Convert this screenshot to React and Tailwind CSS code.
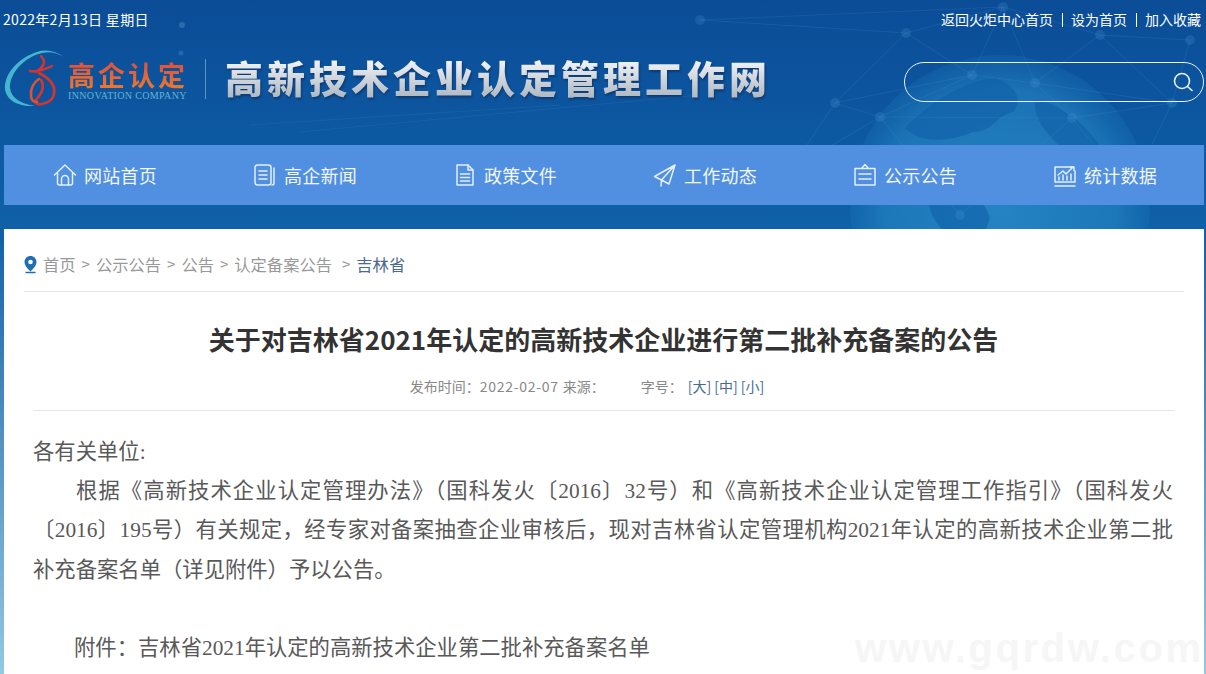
import React from "react";

const sans = "font-['Noto_Sans_CJK_SC','Noto_Sans',sans-serif]";

function HeaderArt() {
  const nodes = [[906,33],[1003,7],[1100,35],[835,103],[972,75],[1035,83],[1172,103],[1072,118],[880,117],[790,170],[1130,190],[960,215],[1190,40],[700,20]];
  const links = [[0,1],[1,2],[0,3],[0,4],[1,4],[1,5],[2,5],[2,6],[3,8],[4,8],[4,5],[5,7],[5,6],[7,6],[8,7],[3,4],[2,12],[6,12],[9,3],[9,8],[10,6],[10,7],[11,7],[11,8],[13,0],[13,1]];
  return (
    <svg className="absolute left-0 top-0" width="1206" height="229" viewBox="0 0 1206 229" fill="none">
      <defs>
        <radialGradient id="globe" cx="50%" cy="50%" r="50%">
          <stop offset="0%" stopColor="#2f93cf" stopOpacity="0.7" />
          <stop offset="78%" stopColor="#2a8fcb" stopOpacity="0.5" />
          <stop offset="100%" stopColor="#1f7fc0" stopOpacity="0.2" />
        </radialGradient>
      </defs>
      <circle cx="1000" cy="205" r="150" fill="url(#globe)" />
      <path d="M905 128c20-22 60-48 90-50 22 8 28 22 18 34-18 4-20 20-40 20-20 8-50 14-68-4zM1035 100c26 2 60 30 76 64-12 8-30 2-42-10-14-12-36-30-34-54zM930 190c26-8 52 2 60 28l-4 11h-44c-12-12-16-28-12-39z" fill="#0e5da6" fillOpacity="0.55" />
      {links.map(([a, b], i) => (
        <line key={i} x1={nodes[a][0]} y1={nodes[a][1]} x2={nodes[b][0]} y2={nodes[b][1]} stroke="#5aa5dc" strokeOpacity="0.15" strokeWidth="1" />
      ))}
      {nodes.map(([x, y], i) => (
        <circle key={i} cx={x} cy={y} r="5" fill="#4f9ad8" fillOpacity="0.22" />
      ))}
      <circle cx="182" cy="25" r="3" fill="#8fc0e8" fillOpacity="0.25" />
      <circle cx="181" cy="53" r="2.500" fill="#8fc0e8" fillOpacity="0.2" />
      <path d="M250 125 L560 105 M300 132 L700 95" stroke="#4f9ad8" strokeOpacity="0.14" />
    </svg>
  );
}

function LogoMark() {
  return (
    <svg width="62" height="60" viewBox="0 0 62 60" fill="none" className="shrink-0">
      <path d="M60 8C52 2 42 0 33 3 14 9 0 25 1 40c1 9 10 18 30 17-14-2-24-8-25-18C5 25 20 8 38 4c8-2 15 0 22 4z" fill="#45b6cf" />
      <path d="M37 7c4 4 4 8 0 12l-5 4M26 22c7 1 16-2 22-5" stroke="#d8342c" strokeWidth="2.400" strokeLinecap="round" />
      <path d="M35 24c12 6 18 14 14 24-2 5-7 6-11 7-5 1-8-1-6-4 6-7 9-13 5-20" stroke="#d8342c" strokeWidth="2.600" strokeLinecap="round" />
      <path d="M35 30c-5 3-9 10-8 17 0 4 3 6 6 6" stroke="#e0552f" strokeWidth="2.600" strokeLinecap="round" />
    </svg>
  );
}

const Stroke = ({ children }) => (
  <svg width="24" height="24" viewBox="0 0 24 24" fill="none" stroke="#e3effb" strokeWidth="1.500" strokeLinejoin="round" strokeLinecap="round" className="shrink-0">
    {children}
  </svg>
);

const icons = {
  home: (
    <Stroke>
      <path d="M1.500 12 12 2l10.500 10M4.500 10v10a2 2 0 0 0 2 2h11a2 2 0 0 0 2-2V10" />
      <path d="M8.500 22v-6a3.500 3.500 0 0 1 7 0v6" />
    </Stroke>
  ),
  news: (
    <Stroke>
      <rect x="2" y="2" width="16" height="20" rx="2.500" />
      <path d="M6 8h8M6 12h8M6 16h8M21 5v15a2 2 0 0 1-2 2" />
    </Stroke>
  ),
  doc: (
    <Stroke>
      <path d="M4 2h11l5 5v15H4z" />
      <path d="M15 2v5h5M7.500 11h9M7.500 14.500h9M7.500 18h9" />
    </Stroke>
  ),
  send: (
    <Stroke>
      <path d="M22 2 1.500 13.500l7 3.500zM22 2 8.500 17 8 23M22 2l-6 19-7.500-4" />
    </Stroke>
  ),
  board: (
    <Stroke>
      <path d="M2 5.500h20V22H2zM8.500 5.500 12 1.500l3.500 4M6 11h12M6 16h12" />
    </Stroke>
  ),
  chart: (
    <Stroke>
      <path d="M20 4H2v15h20V8M2 23h20" />
      <path d="m5 12 5-4 3 3 7-7M17.500 4H21v3.500M6 17v-3M10 17v-5M14 17v-4M18 17v-6" />
    </Stroke>
  ),
};

const navItems = [
  ["home", "网站首页"],
  ["news", "高企新闻"],
  ["doc", "政策文件"],
  ["send", "工作动态"],
  ["board", "公示公告"],
  ["chart", "统计数据"],
];

function Sep({ className = "" }) {
  return <span className={`text-[15px] text-[#999] ${className}`}>&gt;</span>;
}

export default function App() {
  return (
    <div className={`relative h-[674px] w-full overflow-hidden bg-gradient-to-b from-[#0b4c97] via-[#0f62a8] via-35% to-[#93c8e2] ${sans}`}>
      <HeaderArt />

      <header className="relative h-[145px]">
        <div className="flex h-[39px] items-center justify-between pl-[3px] pr-[5px] text-[14px] text-white">
          <span className="tracking-[0.3px]">2022年2月13日 星期日</span>
          <div className="flex items-center gap-[8.500px]">
            <span>返回火炬中心首页</span>
            <span className="h-[14px] w-px bg-white" />
            <span>设为首页</span>
            <span className="h-[14px] w-px bg-white" />
            <span>加入收藏</span>
          </div>
        </div>

        <div className="flex h-[86px] items-center pb-[6px] pl-1 pr-[2px]">
          <LogoMark />
          <div className="ml-[2px] mt-[2px] flex w-[122px] flex-col">
            <span className="bg-gradient-to-b from-[#df4a3a] to-[#ea7a30] bg-clip-text text-[27px] font-bold leading-[31px] tracking-[3px] text-transparent">高企认定</span>
            <span className="font-['Liberation_Serif',serif] text-[10px] leading-[11px] tracking-[0.35px] whitespace-nowrap text-[#63b6cf]">INNOVATION COMPANY</span>
          </div>
          <span className="ml-[15px] h-10 w-px bg-[#5f93c6]" />
          <h1 className="mb-[5px] ml-[19px] bg-gradient-to-b from-white to-[#aab4be] bg-clip-text text-[38px] font-black leading-[46px] tracking-[4px] whitespace-nowrap text-transparent drop-shadow-[1px_2px_1px_rgba(10,40,90,0.6)]">
            高新技术企业认定管理工作网
          </h1>
          <div className="ml-auto mt-[6px] flex h-10 w-[300px] items-center justify-end rounded-full border border-[#e8f2fb] pr-[9px]">
            <svg width="22" height="22" viewBox="0 0 22 22" fill="none" stroke="#e8f2fb" strokeWidth="1.600" strokeLinecap="round">
              <circle cx="10" cy="10" r="7.500" />
              <path d="m15.500 15.500 4.500 4" />
            </svg>
          </div>
        </div>
      </header>

      <nav className="relative mx-1 grid h-[60px] w-[1200px] grid-cols-6 bg-[#518fe0]">
        {navItems.map(([icon, label]) => (
          <a key={label} className="ml-[2px] flex items-center justify-center gap-[7px] text-[18px] tracking-[0.2px] text-[#f2f7fd]">
            {icons[icon]}
            <span>{label}</span>
          </a>
        ))}
      </nav>

      <main className="relative mx-1 mt-6 h-[445px] w-[1200px] overflow-hidden bg-white">
        <div className="mx-5 flex h-[63px] items-center gap-[6px] border-b border-[#e6e6e6] pt-[9px] text-[16.300px] text-[#999]">
          <svg width="13" height="18" viewBox="0 0 13 18" className="shrink-0">
            <path fillRule="evenodd" d="M6.500 0C3 0 .5 2.700.5 6c0 3.500 3.500 7 6 9.500 2.500-2.500 6-6 6-9.500 0-3.300-2.500-6-6-6zm0 3.700a2.300 2.300 0 1 1 0 4.600 2.300 2.300 0 0 1 0-4.600z" fill="#1f6fb5" />
            <path d="M2 16.500h9" stroke="#1f6fb5" strokeWidth="1.400" strokeLinecap="round" />
          </svg>
          <span>首页</span>
          <Sep />
          <span>公示公告</span>
          <Sep />
          <span>公告</span>
          <Sep />
          <span>认定备案公告</span>
          <Sep className="ml-1" />
          <span className="text-[#4a6a92]">吉林省</span>
        </div>

        <h2 className="mt-[27px] h-[40px] pr-[1px] text-center text-[26px] leading-[40px] font-bold whitespace-nowrap text-[#333]">
          关于对吉林省2021年认定的高新技术企业进行第二批补充备案的公告
        </h2>

        <div className="mx-[29px] mt-[7px] flex h-[45px] items-center justify-center border-b border-[#e6e6e6] pb-[3px] pr-[34px] text-[14px] text-[#888]">
          <span>发布时间&#xFF1A;</span>
          <span className="tracking-[0.7px]">2022-02-07</span>
          <span className="ml-1">来源&#xFF1A;</span>
          <span className="ml-[36px]">字号&#xFF1A;</span>
          <span className="ml-[5px] text-[#456a92]">[大]</span>
          <span className="ml-[3px] text-[#456a92]">[中]</span>
          <span className="ml-[3px] text-[#456a92]">[小]</span>
        </div>

        <article className="ml-[29px] mr-[31px] mt-[22px] font-['Liberation_Serif','Noto_Sans_CJK_SC',serif] text-[21.330px] leading-[39.200px] text-[#595959]">
          <p>各有关单位:</p>
          <p>
            <span className="block indent-[43px] whitespace-nowrap text-justify [text-align-last:justify]">根据《高新技术企业认定管理办法》&#xFF08;国科发火〔2016〕32号&#xFF09;和《高新技术企业认定管理工作指引》&#xFF08;国科发火</span>
            <span className="block whitespace-nowrap text-justify [text-align-last:justify]">〔2016〕195号&#xFF09;有关规定&#xFF0C;经专家对备案抽查企业审核后&#xFF0C;现对吉林省认定管理机构2021年认定的高新技术企业第二批</span>
            <span className="block">补充备案名单&#xFF08;详见附件&#xFF09;予以公告。</span>
          </p>
          <p>&nbsp;</p>
          <p className="indent-[41px]">附件&#xFF1A;吉林省2021年认定的高新技术企业第二批补充备案名单</p>
        </article>

        <span aria-hidden="true" className="pointer-events-none absolute left-[851px] top-[396px] font-['Liberation_Sans',sans-serif] text-[40px] leading-[46px] font-bold tracking-[2.600px] whitespace-nowrap text-[#f6f6f6]">www.gqrdw.com</span>
      </main>
    </div>
  );
}
